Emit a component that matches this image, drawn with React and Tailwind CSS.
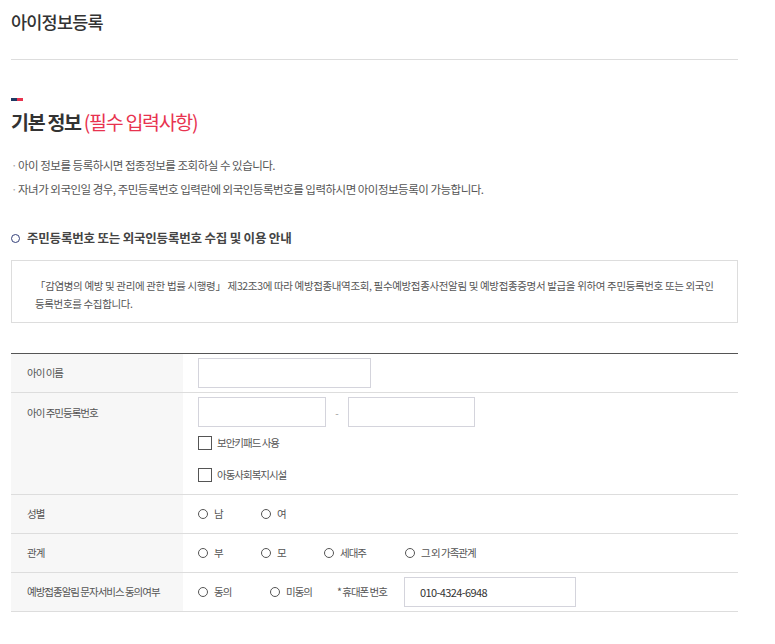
import React from "react";

const font = { fontFamily: '"Noto Sans CJK KR", "Noto Sans", sans-serif' };

function Radio({ label, w }) {
  return (
    <div className={`flex items-center ${w}`}>
      <span className="box-border inline-block h-[10px] w-[10px] rounded-full border border-[#555]" />
      <span className="ml-[6px] text-[10.5px] tracking-[-1px] text-[#555]">{label}</span>
    </div>
  );
}

function Checkbox({ label, cls }) {
  return (
    <div className={`flex h-[20px] items-center ${cls}`}>
      <span className="box-border inline-block h-[14px] w-[14px] border border-[#555] bg-white" />
      <span className="ml-[5px] text-[10.5px] tracking-[-1px] text-[#555]">{label}</span>
    </div>
  );
}

function Label({ children, top }) {
  return (
    <div
      className={`flex w-[172px] shrink-0 bg-[#f7f7f7] pl-[16px] text-[10.5px] leading-[20px] tracking-[-1px] text-[#555] ${
        top ? "items-start pt-[10px]" : "items-center"
      }`}
    >
      {children}
    </div>
  );
}

export default function App() {
  return (
    <div className="min-h-[644px] bg-white" style={font}>
      <div className="ml-[11px] w-[727px] pt-[10px]">
        <h1 className="text-[17.5px] font-medium leading-[24px] tracking-[-0.8px] text-[#333]">아이정보등록</h1>
        <div className="mt-[25px] h-px bg-[#ddd]" />

        <div className="mt-[38px] flex h-[3px]">
          <span className="w-[6px] bg-[#1f3a63]" />
          <span className="w-[6px] bg-[#e8334f]" />
        </div>
        <h2 className="mt-[7px] text-[19.5px] leading-[28px] tracking-[-1.3px]">
          <span className="font-bold text-[#333]">기본 정보</span>{" "}
          <span className="font-normal text-[#e8334f]">(필수 입력사항)</span>
        </h2>

        <ul className="mt-[17px] text-[11.5px] leading-[24px] tracking-[-0.5px] text-[#555]">
          <li className="flex">
            <span className="w-[7px] text-[#aaa]">·</span>
            <span>아이 정보를 등록하시면 접종정보를 조회하실 수 있습니다.</span>
          </li>
          <li className="flex">
            <span className="w-[7px] text-[#aaa]">·</span>
            <span>자녀가 외국인일 경우, 주민등록번호 입력란에 외국인등록번호를 입력하시면 아이정보등록이 가능합니다.</span>
          </li>
        </ul>

        <div className="mt-[27px] flex h-[20px] items-center">
          <span className="box-border inline-block h-[9px] w-[9px] rounded-full border-[1.5px] border-[#34407a]" />
          <span className="ml-[7px] text-[12.5px] font-bold tracking-[-0.2px] text-[#444]">
            주민등록번호 또는 외국인등록번호 수집 및 이용 안내
          </span>
        </div>

        <div className="mt-[12px] border border-[#ddd] pb-[9px] pl-[23px] pt-[16px] text-[10.5px] leading-[18px] tracking-[-0.35px] text-[#555]">
          <div className="whitespace-nowrap">
            「감염병의 예방 및 관리에 관한 법률 시행령」 제32조3에 따라 예방접종내역조회, 필수예방접종사전알림 및 예방접종증명서 발급을 위하여 주민등록번호 또는 외국인
          </div>
          <div className="whitespace-nowrap">등록번호를 수집합니다.</div>
        </div>

        <div className="mt-[30px] border-t border-[#555]">
          {/* row 1 */}
          <div className="flex border-b border-[#ddd]">
            <Label>아이 이름</Label>
            <div className="flex-1 py-[4px] pl-[15px]">
              <div className="box-border h-[30px] w-[173px] border border-[#d4d4dc] bg-white" />
            </div>
          </div>

          {/* row 2 */}
          <div className="flex border-b border-[#ddd]">
            <Label top>아이 주민등록번호</Label>
            <div className="flex-1 pb-[9px] pl-[15px] pt-[4px]">
              <div className="flex items-center">
                <div className="box-border h-[30px] w-[128px] border border-[#d4d4dc] bg-white" />
                <span className="w-[22px] text-center text-[10px] text-[#999]">-</span>
                <div className="box-border h-[30px] w-[127px] border border-[#d4d4dc] bg-white" />
              </div>
              <Checkbox label="보안키패드 사용" cls="mt-[6px]" />
              <Checkbox label="아동사회복지시설" cls="mt-[12px]" />
            </div>
          </div>

          {/* row 3 */}
          <div className="flex h-[39px] border-b border-[#ddd]">
            <Label>성별</Label>
            <div className="flex flex-1 items-center pl-[15px]">
              <Radio label="남" w="w-[63px]" />
              <Radio label="여" w="w-[63px]" />
            </div>
          </div>

          {/* row 4 */}
          <div className="flex h-[39px] border-b border-[#ddd]">
            <Label>관계</Label>
            <div className="flex flex-1 items-center pl-[15px]">
              <Radio label="부" w="w-[63px]" />
              <Radio label="모" w="w-[63px]" />
              <Radio label="세대주" w="w-[81px]" />
              <Radio label="그 외 가족관계" w="w-[100px]" />
            </div>
          </div>

          {/* row 5 */}
          <div className="flex border-b border-[#ddd]">
            <Label>예방접종알림 문자서비스 동의여부</Label>
            <div className="flex flex-1 items-center py-[4px] pl-[15px]">
              <Radio label="동의" w="w-[72px]" />
              <Radio label="미동의" w="w-[67px]" />
              <span className="w-[67px] text-[10.5px] tracking-[-1px] text-[#555]">* 휴대폰 번호</span>
              <div className="box-border flex h-[30px] w-[172px] items-center border border-[#d4d4dc] bg-white pl-[15px] text-[11px] tracking-[-0.6px] text-[#333]">
                010-4324-6948
              </div>
            </div>
          </div>
        </div>
      </div>
    </div>
  );
}
